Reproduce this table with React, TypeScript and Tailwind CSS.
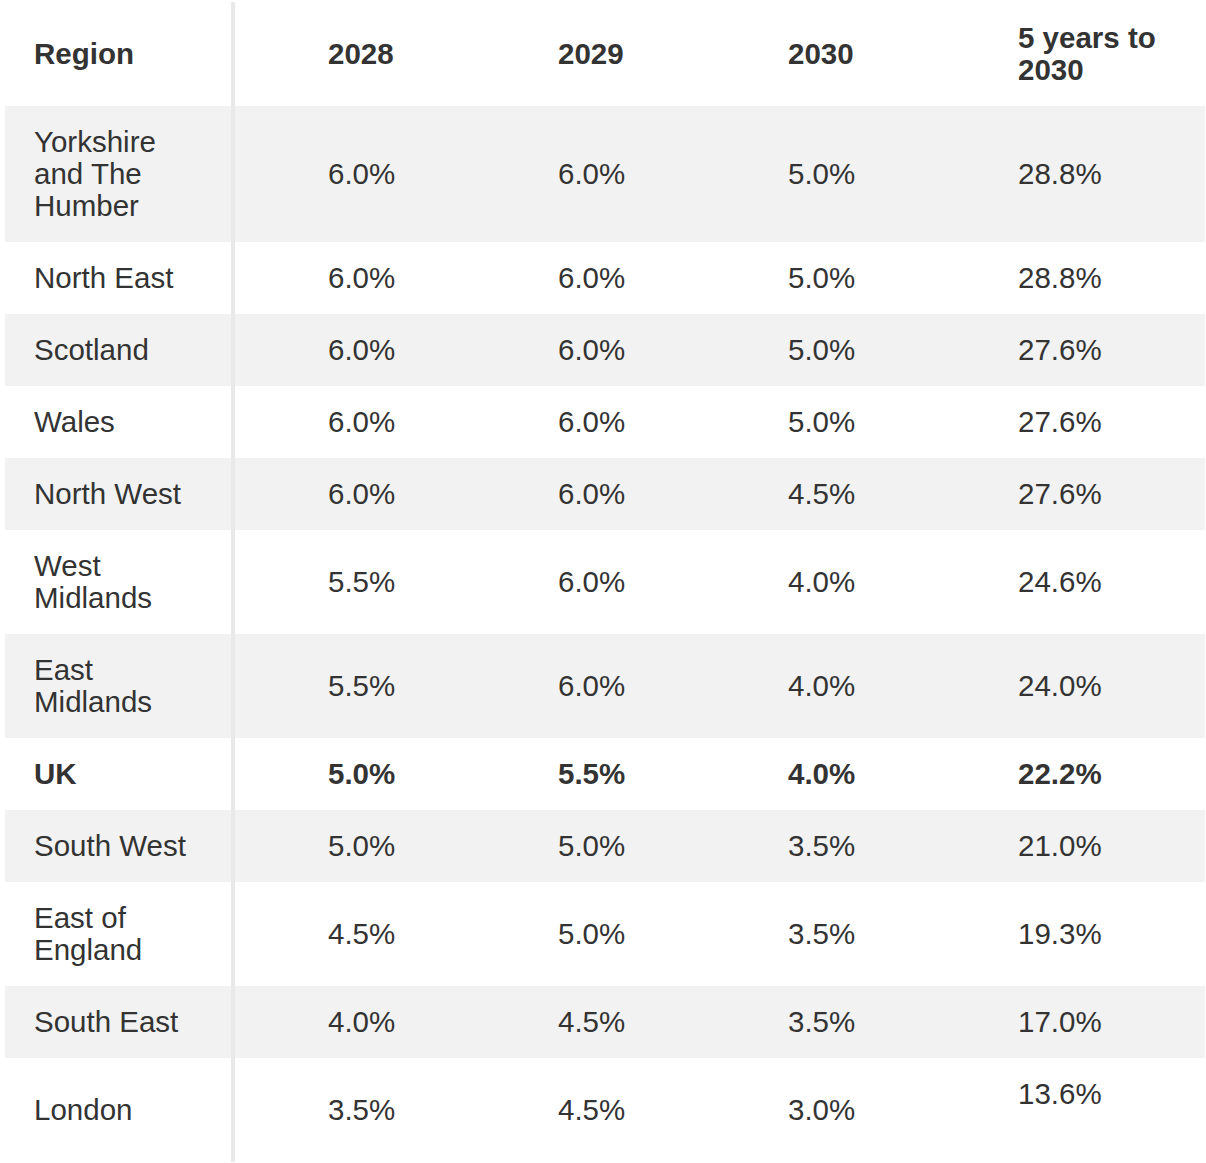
type Row = {
  region: string[];
  values: string[];
  bold?: boolean;
  topLast?: boolean;
};

const rows: Row[] = [
  { region: ["Yorkshire", "and The", "Humber"], values: ["6.0%", "6.0%", "5.0%", "28.8%"] },
  { region: ["North East"], values: ["6.0%", "6.0%", "5.0%", "28.8%"] },
  { region: ["Scotland"], values: ["6.0%", "6.0%", "5.0%", "27.6%"] },
  { region: ["Wales"], values: ["6.0%", "6.0%", "5.0%", "27.6%"] },
  { region: ["North West"], values: ["6.0%", "6.0%", "4.5%", "27.6%"] },
  { region: ["West", "Midlands"], values: ["5.5%", "6.0%", "4.0%", "24.6%"] },
  { region: ["East", "Midlands"], values: ["5.5%", "6.0%", "4.0%", "24.0%"] },
  { region: ["UK"], values: ["5.0%", "5.5%", "4.0%", "22.2%"], bold: true },
  { region: ["South West"], values: ["5.0%", "5.0%", "3.5%", "21.0%"] },
  { region: ["East of", "England"], values: ["4.5%", "5.0%", "3.5%", "19.3%"] },
  { region: ["South East"], values: ["4.0%", "4.5%", "3.5%", "17.0%"] },
  { region: ["London"], values: ["3.5%", "4.5%", "3.0%", "13.6%"], topLast: true },
];

function Lines({ lines }: { lines: string[] }) {
  return (
    <>
      {lines.map((l, i) => (
        <span key={i} className="block whitespace-nowrap">
          {l}
        </span>
      ))}
    </>
  );
}

export default function App() {
  return (
    <div
      className="min-h-[1163px] bg-white pt-[2px] text-[29.5px] leading-8 text-[#333333]"
      style={{ fontFamily: '"Liberation Sans", Arial, sans-serif' }}
    >
      <div className="ml-[5px] w-[1200px]">
        {/* header */}
        <div className="flex font-bold">
          <div className="flex w-[230px] flex-col justify-center border-r-4 border-[#e9e9e9] py-5 pl-[29px]">
            Region
          </div>
          <div className="flex w-[230px] flex-col justify-center py-5 pl-[93px]">2028</div>
          <div className="flex w-[230px] flex-col justify-center py-5 pl-[93px]">2029</div>
          <div className="flex w-[230px] flex-col justify-center py-5 pl-[93px]">2030</div>
          <div className="flex w-[280px] flex-col justify-center py-5 pl-[93px]">
            <Lines lines={["5 years to", "2030"]} />
          </div>
        </div>

        {rows.map((row, i) => (
          <div
            key={i}
            className={`flex ${i % 2 === 0 ? "bg-[#f2f2f2]" : "bg-white"} ${row.bold ? "font-bold" : ""}`}
          >
            <div className="flex w-[230px] flex-col justify-center border-r-4 border-[#e9e9e9] py-5 pl-[29px]">
              <Lines lines={row.region} />
            </div>
            {row.values.map((v, j) => {
              const last = j === row.values.length - 1;
              return (
                <div
                  key={j}
                  className={`flex py-5 pl-[93px] ${last ? "w-[280px]" : "w-[230px]"} ${
                    last && row.topLast ? "min-h-[104px] items-start" : "items-center"
                  }`}
                >
                  {v}
                </div>
              );
            })}
          </div>
        ))}
      </div>
    </div>
  );
}
